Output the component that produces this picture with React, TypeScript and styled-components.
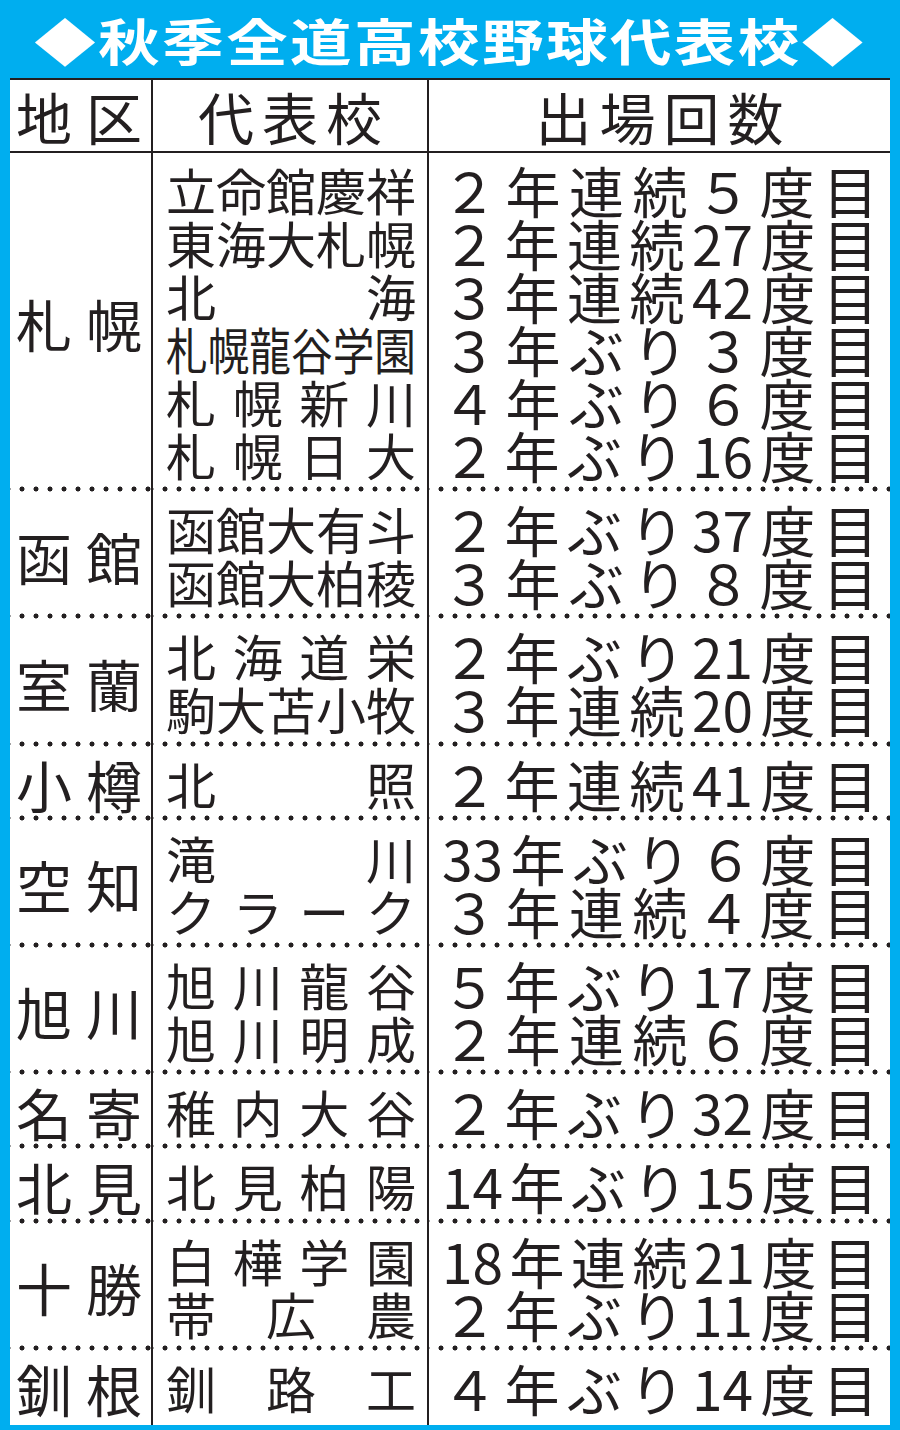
import styled, { createGlobalStyle } from 'styled-components';

type Entry = { school: string; record: string; narrow?: boolean };
type Group = { area: string; rows: Entry[] };

const groups: Group[] = [
  {
    area: '札幌',
    rows: [
      { school: '立命館慶祥', record: '２年連続５度目' },
      { school: '東海大札幌', record: '２年連続27度目' },
      { school: '北海', record: '３年連続42度目' },
      { school: '札幌龍谷学園', record: '３年ぶり３度目', narrow: true },
      { school: '札幌新川', record: '４年ぶり６度目' },
      { school: '札幌日大', record: '２年ぶり16度目' },
    ],
  },
  {
    area: '函館',
    rows: [
      { school: '函館大有斗', record: '２年ぶり37度目' },
      { school: '函館大柏稜', record: '３年ぶり８度目' },
    ],
  },
  {
    area: '室蘭',
    rows: [
      { school: '北海道栄', record: '２年ぶり21度目' },
      { school: '駒大苫小牧', record: '３年連続20度目' },
    ],
  },
  { area: '小樽', rows: [{ school: '北照', record: '２年連続41度目' }] },
  {
    area: '空知',
    rows: [
      { school: '滝川', record: '33年ぶり６度目' },
      { school: 'クラーク', record: '３年連続４度目' },
    ],
  },
  {
    area: '旭川',
    rows: [
      { school: '旭川龍谷', record: '５年ぶり17度目' },
      { school: '旭川明成', record: '２年連続６度目' },
    ],
  },
  { area: '名寄', rows: [{ school: '稚内大谷', record: '２年ぶり32度目' }] },
  { area: '北見', rows: [{ school: '北見柏陽', record: '14年ぶり15度目' }] },
  {
    area: '十勝',
    rows: [
      { school: '白樺学園', record: '18年連続21度目' },
      { school: '帯広農', record: '２年ぶり11度目' },
    ],
  },
  { area: '釧根', rows: [{ school: '釧路工', record: '４年ぶり14度目' }] },
];

export default function App() {
  return (
    <>
      <GlobalStyle />
      <Frame>
        <TitleBar>
          <TitleText>◆秋季全道高校野球代表校◆</TitleText>
        </TitleBar>
        <Table>
          <HeaderRow>
            <HeaderCell $justify>
              <AreaName>地区</AreaName>
            </HeaderCell>
            <HeaderCell $spacing={8}>代表校</HeaderCell>
            <HeaderCell $spacing={8} $last>
              出場回数
            </HeaderCell>
          </HeaderRow>
          {groups.map((g, i) => {
            const dotted = i < groups.length - 1;
            return (
              <GroupRow key={g.area} $grow={!dotted}>
                <AreaCell $dotted={dotted}>
                  <AreaName>{g.area}</AreaName>
                </AreaCell>
                <SchoolCell $dotted={dotted}>
                  {g.rows.map((r) =>
                    r.narrow ? (
                      <NarrowLine key={r.school}>{r.school}</NarrowLine>
                    ) : (
                      <SchoolLine key={r.school}>{r.school}</SchoolLine>
                    )
                  )}
                </SchoolCell>
                <RecordCell $dotted={dotted}>
                  {g.rows.map((r) => (
                    <RecordLine key={r.school}>{r.record}</RecordLine>
                  ))}
                </RecordCell>
              </GroupRow>
            );
          })}
        </Table>
      </Frame>
    </>
  );
}

const ink = '#231f20';
const blue = '#00aeef';

const GlobalStyle = createGlobalStyle`
  body {
    margin: 0;
    background: ${blue};
    font-family: "Noto Sans CJK JP", "Noto Sans", sans-serif;
  }
`;

const Frame = styled.div`
  width: 900px;
  height: 1430px;
  box-sizing: border-box;
  padding: 0 10px 10px;
  background: ${blue};
  display: flex;
  flex-direction: column;
`;

const TitleBar = styled.div`
  flex: none;
  height: 78px;
  display: flex;
  align-items: center;
  justify-content: center;
`;

const TitleText = styled.span`
  display: inline-block;
  color: #fff;
  font-size: 50px;
  font-weight: 700;
  line-height: 78px;
  letter-spacing: 2px;
  transform: scaleX(1.23);
  white-space: nowrap;
`;

const Table = styled.div`
  flex: 1;
  display: flex;
  flex-direction: column;
  background: #fff;
  border-top: 2px solid ${ink};
  color: ${ink};
`;

const HeaderRow = styled.div`
  flex: none;
  display: grid;
  grid-template-columns: 143px 276px 1fr;
  height: 71px;
  border-bottom: 2px solid ${ink};
`;

const HeaderCell = styled.div<{ $spacing?: number; $justify?: boolean; $last?: boolean }>`
  display: flex;
  align-items: center;
  justify-content: center;
  font-size: 56px;
  line-height: 56px;
  letter-spacing: ${(p) => p.$spacing ?? 0}px;
  padding: ${(p) => (p.$justify ? '0 9px 0 6px' : `0 0 0 ${p.$spacing ?? 0}px`)};
  border-right: ${(p) => (p.$last ? 'none' : `2px solid ${ink}`)};
`;

const GroupRow = styled.div<{ $grow?: boolean }>`
  display: grid;
  grid-template-columns: 143px 276px 1fr;
  flex: ${(p) => (p.$grow ? 1 : 'none')};
`;

const Cell = styled.div<{ $dotted?: boolean }>`
  padding-top: 10px;
  padding-bottom: 11.2px;
  background-image: ${(p) =>
    p.$dotted ? `radial-gradient(circle, ${ink} 2.2px, transparent 2.8px)` : 'none'};
  background-size: 14px 6px;
  background-repeat: repeat-x;
  background-position: 5px bottom;
`;

const AreaCell = styled(Cell)`
  display: flex;
  align-items: center;
  padding-left: 6px;
  padding-right: 9px;
  border-right: 2px solid ${ink};
`;

const AreaName = styled.div`
  width: 100%;
  font-size: 56px;
  line-height: 53px;
  text-align: justify;
  text-align-last: justify;
`;

const SchoolCell = styled(Cell)`
  padding-left: 13px;
  padding-right: 11px;
  border-right: 2px solid ${ink};
  overflow: hidden;
`;

const SchoolLine = styled.div`
  font-size: 50px;
  line-height: 53px;
  height: 53px;
  white-space: nowrap;
  text-align: justify;
  text-align-last: justify;
`;

const NarrowLine = styled(SchoolLine)`
  width: 120%;
  transform: scaleX(0.8333);
  transform-origin: left center;
`;

const RecordCell = styled(Cell)`
  padding-left: 13px;
  padding-right: 12px;
`;

const RecordLine = styled.div`
  font-size: 55px;
  line-height: 53px;
  height: 53px;
  white-space: nowrap;
  text-align: justify;
  text-align-last: justify;
`;
